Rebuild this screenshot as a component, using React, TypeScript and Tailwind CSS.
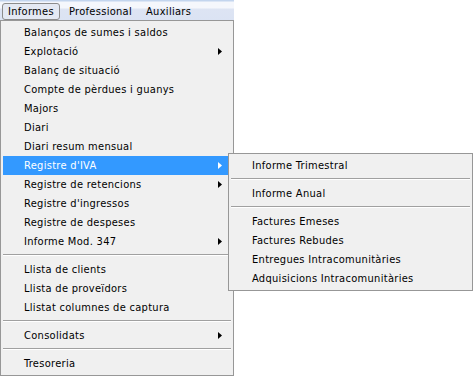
import React from "react";

type Item = { label: string; arrow?: boolean; active?: boolean } | "sep";

const mainItems: Item[] = [
  { label: "Balanços de sumes i saldos" },
  { label: "Explotació", arrow: true },
  { label: "Balanç de situació" },
  { label: "Compte de pèrdues i guanys" },
  { label: "Majors" },
  { label: "Diari" },
  { label: "Diari resum mensual" },
  { label: "Registre d'IVA", arrow: true, active: true },
  { label: "Registre de retencions", arrow: true },
  { label: "Registre d'ingressos" },
  { label: "Registre de despeses" },
  { label: "Informe Mod. 347", arrow: true },
  "sep",
  { label: "Llista de clients" },
  { label: "Llista de proveïdors" },
  { label: "Llistat columnes de captura" },
  "sep",
  { label: "Consolidats", arrow: true },
  "sep",
  { label: "Tresoreria" },
];

const subItems: Item[] = [
  { label: "Informe Trimestral" },
  "sep",
  { label: "Informe Anual" },
  "sep",
  { label: "Factures Emeses" },
  { label: "Factures Rebudes" },
  { label: "Entregues Intracomunitàries" },
  { label: "Adquisicions Intracomunitàries" },
];

function Arrow({ white }: { white?: boolean }) {
  return (
    <svg width="4" height="7" viewBox="0 0 4 7" className="absolute right-[9px] top-[6px]">
      <path d="M0 0 L4 3.5 L0 7 Z" fill={white ? "#ffffff" : "#000000"} />
    </svg>
  );
}

function MenuList({ items }: { items: Item[] }) {
  return (
    <div className="flex flex-col py-[2px]">
      {items.map((it, i) =>
        it === "sep" ? (
          <div key={i} className="h-[9px] pt-[3px] px-[2px]">
            <div className="h-[1px] bg-[#a0a0a0]" />
            <div className="h-[1px] bg-white" />
          </div>
        ) : (
          <div
            key={i}
            className={
              "relative h-[19px] mx-[2px] pl-[21px] flex items-center leading-none " +
              (it.active ? "bg-[#3399ff] text-white" : "text-black")
            }
          >
            <span>{it.label}</span>
            {it.arrow && <Arrow white={it.active} />}
          </div>
        )
      )}
    </div>
  );
}

export default function App() {
  return (
    <div
      className="relative w-[475px] h-[376px] bg-white overflow-hidden text-[11px] tracking-[0.3px]"
      style={{ fontFamily: '"DejaVu Sans Condensed", "Liberation Sans", sans-serif' }}
    >
      <div className="w-[234px] flex flex-col">
        <div className="h-[20px] flex items-stretch bg-[linear-gradient(to_bottom,#c3d5ee_0px,#c3d5ee_1px,#f5f7fc_2px,#f5f7fc_8px,#dde4f3_9px,#dbe3f3_20px)]">
          <div className="ml-[2px] mt-[3px] h-[17px] w-[58px] pl-[5px] flex items-center border border-[#8c8c8c] rounded-[3px] bg-[#e4e9f3] leading-none">
            Informes
          </div>
          <div className="ml-[9px] flex items-center leading-none pt-[2px]">Professional</div>
          <div className="ml-[14px] flex items-center leading-none pt-[2px]">Auxiliars</div>
        </div>
        <div className="h-[356px] border border-[#979797] bg-[#f0f0f0]">
          <MenuList items={mainItems} />
        </div>
      </div>
      <div className="absolute left-[228px] top-[153px] w-[245px] h-[138px] border border-[#979797] bg-[#f0f0f0]">
        <MenuList items={subItems} />
      </div>
    </div>
  );
}
